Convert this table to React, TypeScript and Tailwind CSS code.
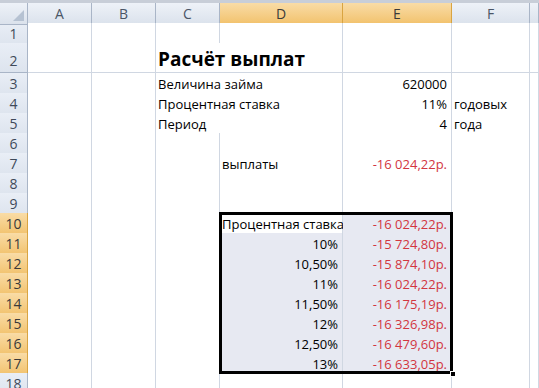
import React from "react";

const GRID = "grid grid-cols-[28px_64px_64px_64px_123px_109px_78px_1fr]";
const line = "border-[#d0d7e2]";
const red = "text-[#d2363f]";

type CellProps = {
  children?: React.ReactNode;
  right?: boolean;
  noRight?: boolean;
  shade?: boolean;
  cls?: string;
};

function Cell({ children, right, noRight, shade, cls = "" }: CellProps) {
  return (
    <div
      className={`relative flex items-end pb-[1px] border-b ${line} ${noRight ? "" : "border-r"} ${
        shade ? "bg-[#e7e9f2]" : "bg-white"
      } ${right ? "justify-end pr-[4px]" : "justify-start pl-[2px]"} whitespace-nowrap overflow-visible ${cls}`}
    >
      {children}
    </div>
  );
}

function RowHead({ n, sel }: { n: number; sel?: boolean }) {
  return (
    <div
      className={`flex items-end justify-center pb-[1px] border-r border-b ${
        sel
          ? "bg-gradient-to-b from-[#f9dca6] to-[#f2c26c] border-[#d9a441] text-[#3a3a3a]"
          : "bg-gradient-to-b from-[#e9eef6] to-[#dde4ee] border-[#a9b5c7] text-[#3f4a5a]"
      } text-[14px]`}
    >
      {n}
    </div>
  );
}

function ColHead({ l, sel }: { l: string; sel?: boolean }) {
  return (
    <div
      className={`flex items-center justify-center border-r border-b text-[14px] ${
        sel
          ? "bg-gradient-to-b from-[#f9dca6] to-[#f2c26c] border-[#d9a441] text-[#3a3a3a]"
          : "bg-gradient-to-b from-[#eef2f8] to-[#dbe2ec] border-[#a9b5c7] text-[#4a5566]"
      }`}
    >
      {l}
    </div>
  );
}

const rates = ["10%", "10,50%", "11%", "11,50%", "12%", "12,50%", "13%"];
const vals = [
  "-15 724,80р.",
  "-15 874,10р.",
  "-16 024,22р.",
  "-16 175,19р.",
  "-16 326,98р.",
  "-16 479,60р.",
  "-16 633,05р.",
];

export default function App() {
  const row = (
    n: number,
    h: string,
    cells: React.ReactNode[],
    sel?: boolean
  ) => (
    <div key={n} className={`${GRID} ${h}`}>
      <RowHead n={n} sel={sel} />
      {cells}
    </div>
  );

  const empty = (k: string, opts: Partial<CellProps> = {}) => <Cell key={k} {...opts} />;

  const rows: React.ReactNode[] = [];
  rows.push(
    row(1, "h-[20px]", [
      empty("a"), empty("b"), empty("c"), empty("d"), empty("e"), empty("f"), empty("g"),
    ])
  );
  rows.push(
    row(2, "h-[30px]", [
      empty("a"),
      empty("b"),
      <Cell key="c" noRight cls="pb-[3px]">
        <span className="text-[19px] font-bold relative z-10 leading-none">Расчёт выплат</span>
      </Cell>,
      empty("d"), empty("e"), empty("f"), empty("g"),
    ])
  );
  rows.push(
    row(3, "h-[20px]", [
      empty("a"), empty("b"),
      <Cell key="c" noRight><span className="relative z-10">Величина займа</span></Cell>,
      empty("d"),
      <Cell key="e" right>620000</Cell>,
      empty("f"), empty("g"),
    ])
  );
  rows.push(
    row(4, "h-[20px]", [
      empty("a"), empty("b"),
      <Cell key="c" noRight><span className="relative z-10">Процентная ставка</span></Cell>,
      empty("d"),
      <Cell key="e" right>11%</Cell>,
      <Cell key="f">годовых</Cell>,
      empty("g"),
    ])
  );
  rows.push(
    row(5, "h-[20px]", [
      empty("a"), empty("b"),
      <Cell key="c" noRight>Период</Cell>,
      empty("d"),
      <Cell key="e" right>4</Cell>,
      <Cell key="f">года</Cell>,
      empty("g"),
    ])
  );
  rows.push(
    row(6, "h-[20px]", [
      empty("a"), empty("b"), empty("c"), empty("d"), empty("e"), empty("f"), empty("g"),
    ])
  );
  rows.push(
    row(7, "h-[20px]", [
      empty("a"), empty("b"), empty("c"),
      <Cell key="d">выплаты</Cell>,
      <Cell key="e" right cls={red}>-16 024,22р.</Cell>,
      empty("f"), empty("g"),
    ])
  );
  rows.push(
    row(8, "h-[20px]", [
      empty("a"), empty("b"), empty("c"), empty("d"), empty("e"), empty("f"), empty("g"),
    ])
  );
  rows.push(
    row(9, "h-[20px]", [
      empty("a"), empty("b"), empty("c"), empty("d"), empty("e"), empty("f"), empty("g"),
    ])
  );
  rows.push(
    row(
      10,
      "h-[20px]",
      [
        empty("a"), empty("b"), empty("c"),
        <Cell key="d">Процентная ставка</Cell>,
        <Cell key="e" right shade cls={red}>-16 024,22р.</Cell>,
        empty("f"), empty("g"),
      ],
      true
    )
  );
  rates.forEach((r, i) => {
    rows.push(
      row(
        11 + i,
        "h-[20px]",
        [
          empty("a"), empty("b"), empty("c"),
          <Cell key="d" right shade>{r}</Cell>,
          <Cell key="e" right shade cls={red}>{vals[i]}</Cell>,
          empty("f"), empty("g"),
        ],
        true
      )
    );
  });
  rows.push(
    row(18, "h-[20px]", [
      empty("a"), empty("b"), empty("c"), empty("d"), empty("e"), empty("f"), empty("g"),
    ])
  );

  return (
    <div
      className="relative w-[539px] h-[388px] overflow-hidden bg-white text-[13px] text-black"
      style={{ fontFamily: '"Open Sans", "Liberation Sans", sans-serif' }}
    >
      <div className="h-[3px] bg-[#c8ced8]" />
      <div className={`${GRID} h-[20px]`}>
        <div className="relative border-r border-b border-[#a9b5c7] bg-gradient-to-b from-[#eef2f8] to-[#dbe2ec]">
          <svg className="absolute right-[3px] bottom-[3px]" width="11" height="11" viewBox="0 0 11 11">
            <polygon points="11,0 11,11 0,11" fill="#b6c2d2" />
          </svg>
        </div>
        <ColHead l="A" />
        <ColHead l="B" />
        <ColHead l="C" />
        <ColHead l="D" sel />
        <ColHead l="E" sel />
        <ColHead l="F" />
        <ColHead l="" />
      </div>
      {rows}
      <div className="absolute left-[219px] top-[212px] w-[234px] h-[162px] border-[3px] border-black pointer-events-none" />
      <div className="absolute left-[450px] top-[371px] w-[6px] h-[6px] bg-black border border-white" />
    </div>
  );
}
